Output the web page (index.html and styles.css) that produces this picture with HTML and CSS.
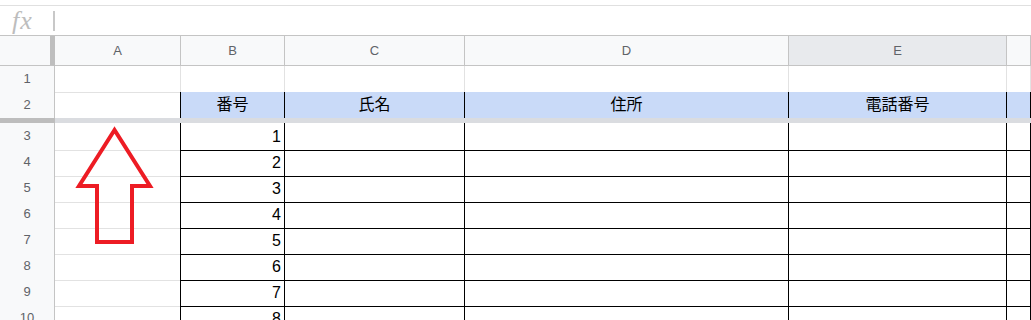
FILE: index.html
```html
<html lang="ja">

<head>
    <meta charset="utf-8" />
    <title>Sheet</title>
    <link rel="stylesheet" href="styles.css">
</head>

<body>
    <div class="sheet">
        <div class="topbar"></div>
        <div class="fxbar">
            <span class="fx">fx</span>
            <span class="sep"></span>
        </div>

        <div class="row colhead">
            <div class="corner"></div>
            <div class="ch">A</div>
            <div class="ch">B</div>
            <div class="ch">C</div>
            <div class="ch">D</div>
            <div class="ch sel">E</div>
            <div class="ch"></div>
        </div>

        <div class="row">
            <div class="rh">1</div>
            <div class="c"></div>
            <div class="c top"></div>
            <div class="c top"></div>
            <div class="c top"></div>
            <div class="c top"></div>
            <div class="c top"></div>
        </div>

        <div class="row">
            <div class="rh">2</div>
            <div class="c edge"></div>
            <div class="c t hd">番号</div>
            <div class="c t hd">氏名</div>
            <div class="c t hd">住所</div>
            <div class="c t hd">電話番号</div>
            <div class="c t hd"></div>
        </div>

        <div class="freeze">
            <div class="fz-h"></div>
            <div class="fz-c"></div>
        </div>

        <div class="row">
            <div class="rh">3</div>
            <div class="c edge"></div>
            <div class="c t num">1</div>
            <div class="c t"></div>
            <div class="c t"></div>
            <div class="c t"></div>
            <div class="c t"></div>
        </div>
        <div class="row">
            <div class="rh">4</div>
            <div class="c edge"></div>
            <div class="c t num">2</div>
            <div class="c t"></div>
            <div class="c t"></div>
            <div class="c t"></div>
            <div class="c t"></div>
        </div>
        <div class="row">
            <div class="rh">5</div>
            <div class="c edge"></div>
            <div class="c t num">3</div>
            <div class="c t"></div>
            <div class="c t"></div>
            <div class="c t"></div>
            <div class="c t"></div>
        </div>
        <div class="row">
            <div class="rh">6</div>
            <div class="c edge"></div>
            <div class="c t num">4</div>
            <div class="c t"></div>
            <div class="c t"></div>
            <div class="c t"></div>
            <div class="c t"></div>
        </div>
        <div class="row">
            <div class="rh">7</div>
            <div class="c edge"></div>
            <div class="c t num">5</div>
            <div class="c t"></div>
            <div class="c t"></div>
            <div class="c t"></div>
            <div class="c t"></div>
        </div>
        <div class="row">
            <div class="rh">8</div>
            <div class="c edge"></div>
            <div class="c t num">6</div>
            <div class="c t"></div>
            <div class="c t"></div>
            <div class="c t"></div>
            <div class="c t"></div>
        </div>
        <div class="row">
            <div class="rh">9</div>
            <div class="c edge"></div>
            <div class="c t num">7</div>
            <div class="c t"></div>
            <div class="c t"></div>
            <div class="c t"></div>
            <div class="c t"></div>
        </div>
        <div class="row">
            <div class="rh">10</div>
            <div class="c edge"></div>
            <div class="c t num">8</div>
            <div class="c t"></div>
            <div class="c t"></div>
            <div class="c t"></div>
            <div class="c t"></div>
        </div>

        <!-- annotation arrow drawn over the grid -->
        <svg class="arrow" width="1031" height="320" viewBox="0 0 1031 320">
            <polygon points="114.5,130 79,186 97,186 97,242 132,242 132,186 150,186"
                fill="none" stroke="#ed1c24" stroke-width="4" stroke-linejoin="miter" />
        </svg>
    </div>
</body>

</html>
```

FILE: styles.css
```css
body {
    margin: 0;
    background: #fff;
    font-family: "Liberation Sans", "Noto Sans CJK JP", sans-serif;
}

.sheet {
    position: relative;
    width: 1031px;
    height: 320px;
    overflow: hidden;
}

.topbar {
    height: 5px;
    border-bottom: 1px solid #e0e0e0;
}

.fxbar {
    height: 29px;
    border-bottom: 1px solid #c4c4c4;
    display: flex;
    align-items: center;
}

.fx {
    width: 53px;
    padding-left: 12px;
    box-sizing: border-box;
    font-family: "Liberation Serif", serif;
    font-style: italic;
    font-size: 26px;
    color: #bdbdbd;
    line-height: 29px;
    letter-spacing: 1px;
}

.sep {
    width: 2px;
    height: 20px;
    background: #c8c8c8;
}

.row {
    display: grid;
    grid-template-columns: 55px 126px 104px 180px 324px 218px 1fr;
    height: 26px;
}

.row > div {
    box-sizing: border-box;
}

.colhead {
    height: 30px;
    background: #f8f9fa;
}

.corner {
    border-right: 5px solid #bebebe;
    border-bottom: 1px solid #c4c4c4;
}

.ch {
    border-right: 1px solid #c4c4c4;
    border-bottom: 1px solid #c4c4c4;
    font-size: 13px;
    color: #5f6368;
    text-align: center;
    line-height: 29px;
}

.ch.sel {
    background: #e8eaed;
}

.rh {
    background: #f8f9fa;
    border-right: 1px solid #c4c4c4;
    border-bottom: 1px solid #e0e0e0;
    font-size: 13px;
    color: #5f6368;
    text-align: center;
    line-height: 26px;
}

.c {
    border-right: 1px solid #e2e2e2;
    border-bottom: 1px solid #e2e2e2;
}

.c.top {
    border-bottom-color: #000;
}

.c.edge {
    border-right-color: #000;
}

.c.t {
    border-right-color: #000;
    border-bottom-color: #000;
}

.hd {
    background: #c9daf8;
    text-align: center;
    font-size: 16px;
    line-height: 25px;
    color: #000;
}

.num {
    text-align: right;
    padding-right: 3px;
    font-size: 16px;
    line-height: 27px;
    color: #000;
}

.freeze {
    display: grid;
    grid-template-columns: 55px 1fr;
    height: 5px;
}

.fz-h {
    background: #bdbdbd;
}

.fz-c {
    background: #dadce0;
}

.arrow {
    position: absolute;
    left: 0;
    top: 0;
    pointer-events: none;
}
```
